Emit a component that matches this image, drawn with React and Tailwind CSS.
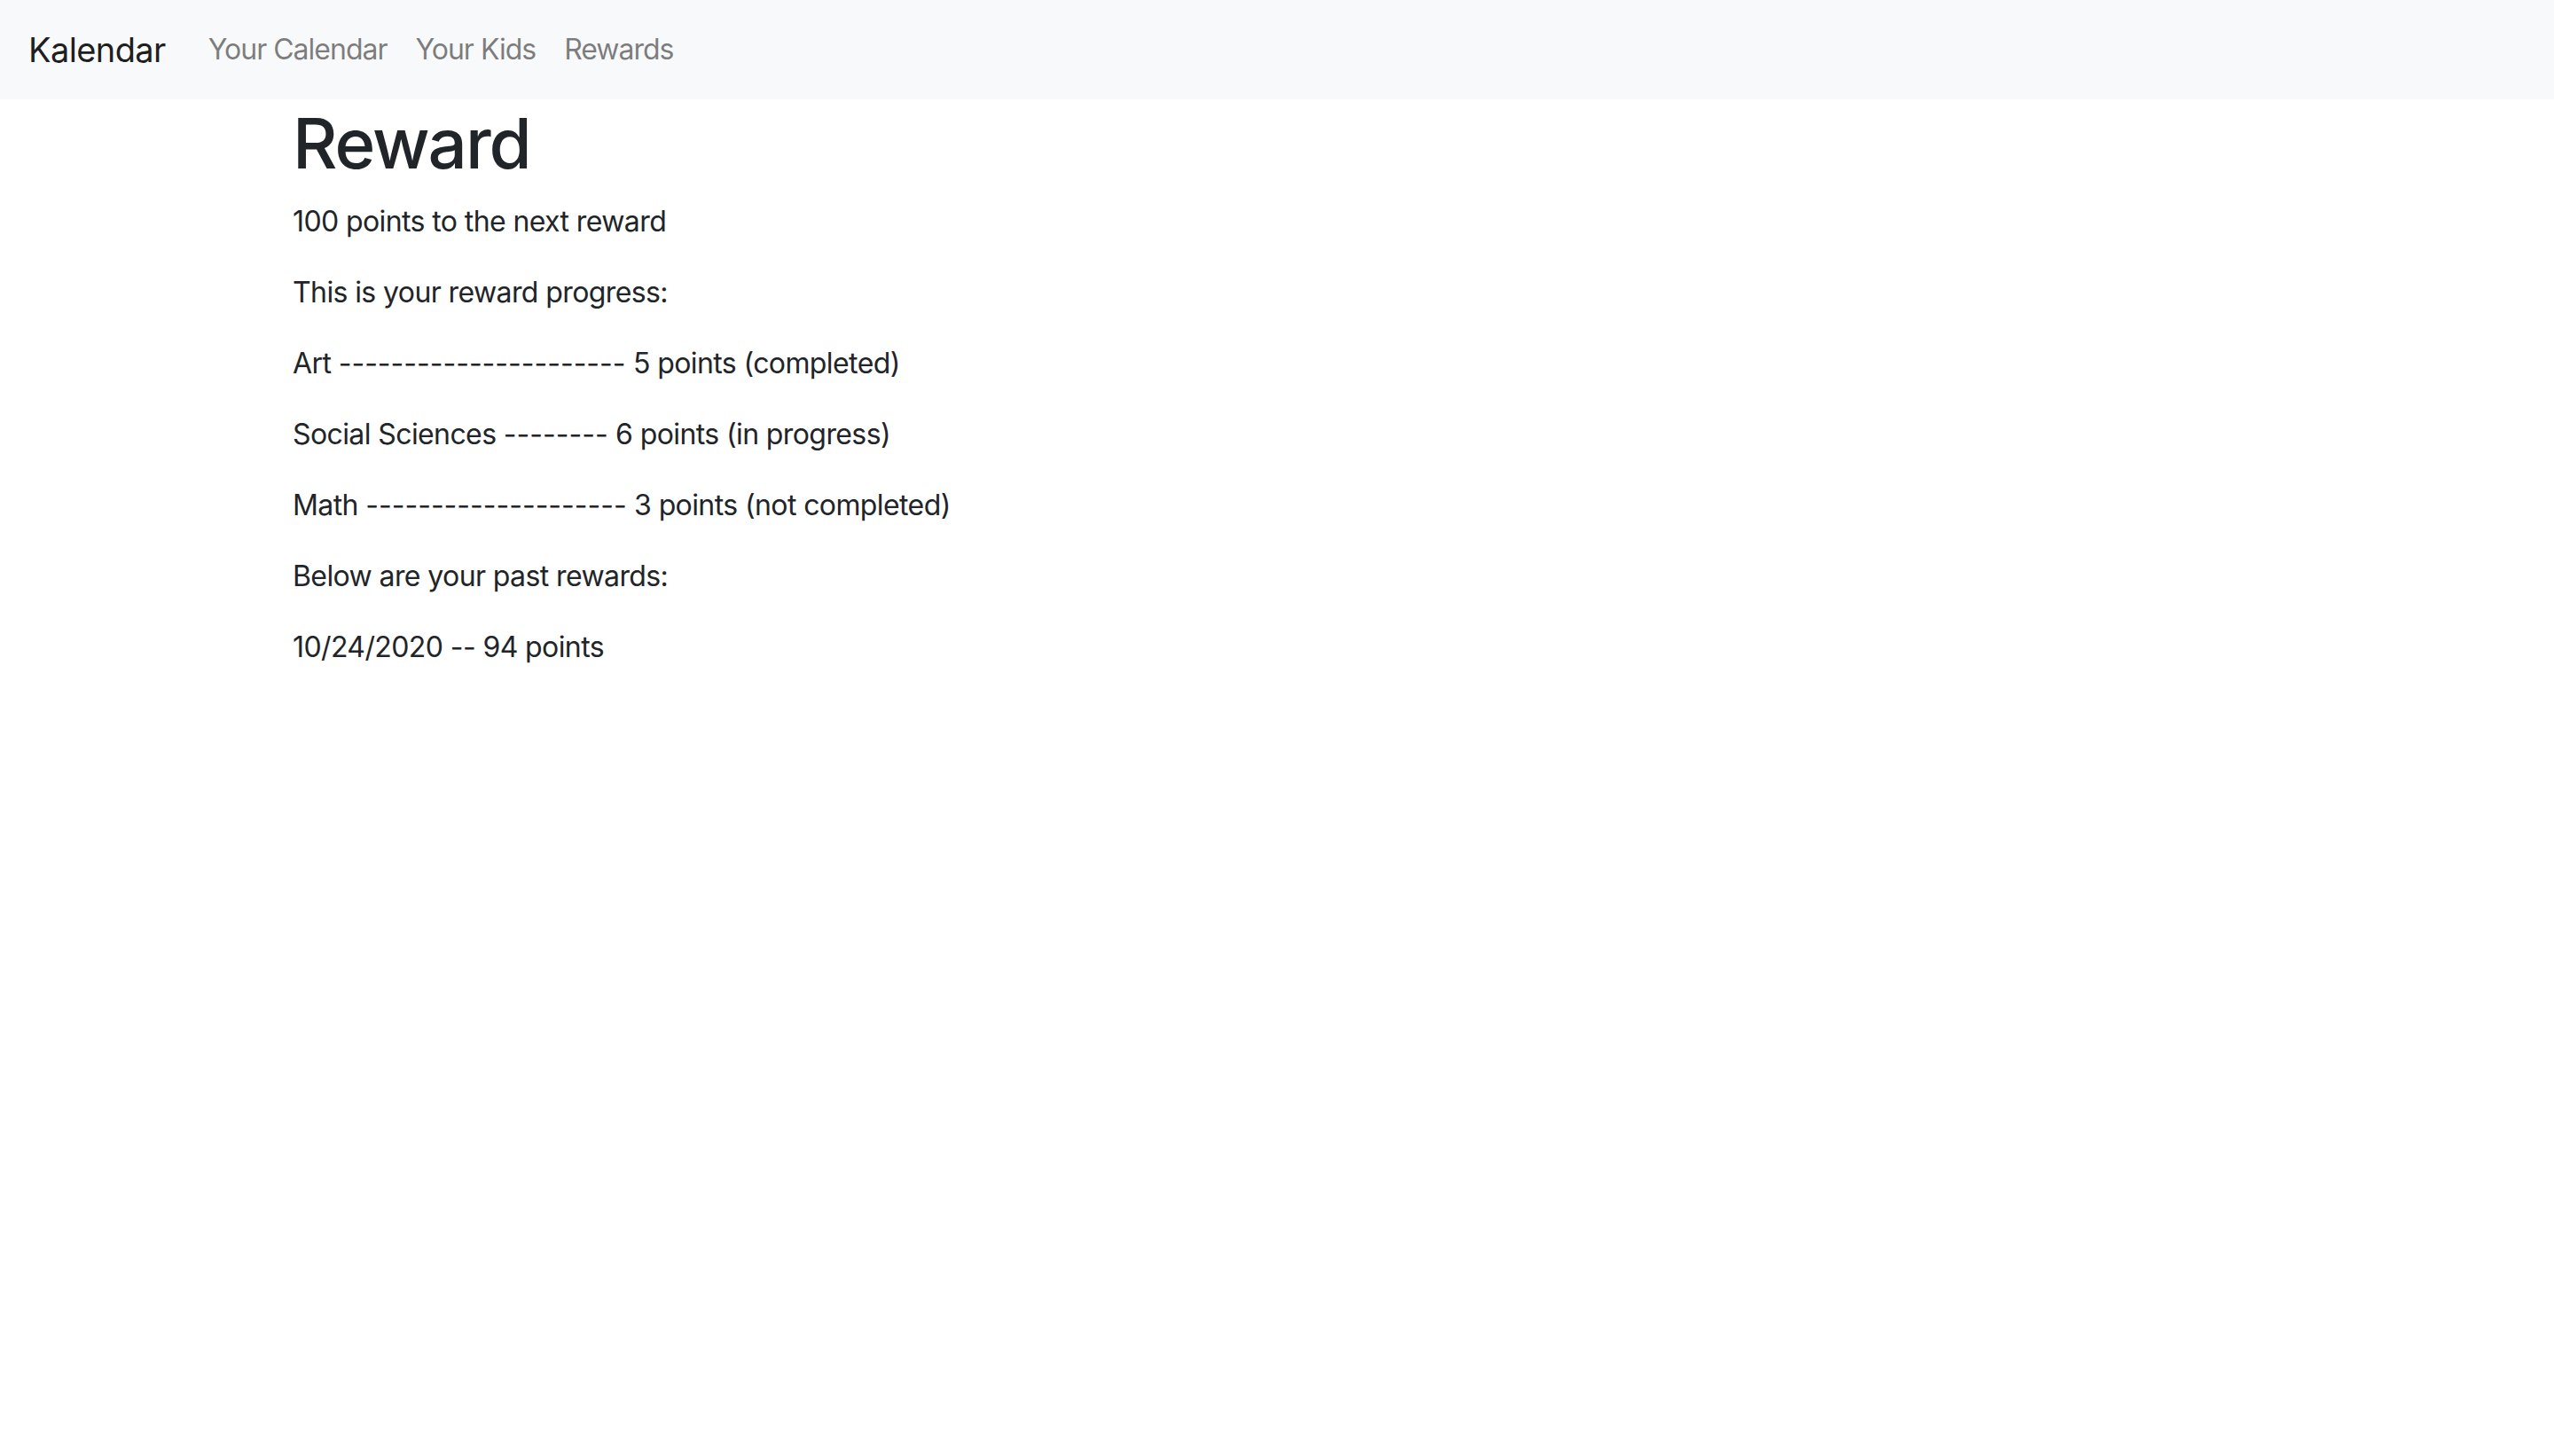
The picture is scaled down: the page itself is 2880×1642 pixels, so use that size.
import React from 'react'

const progress = [
  { subject: 'Art', dashes: '----------------------', points: '5 points (completed)' },
  { subject: 'Social Sciences', dashes: '--------', points: '6 points (in progress)' },
  { subject: 'Math', dashes: '--------------------', points: '3 points (not completed)' },
]

const App = () => {
  return (
    <div className="min-h-screen bg-white text-[#212529] font-['Inter','Liberation_Sans',sans-serif]">
      {/* navbar */}
      <nav className="flex items-center bg-[#f8f9fa] px-[32px] py-[16px]">
        <a className="mr-[32px] py-[10px] text-[38px] leading-[60px] tracking-[-0.6px] text-black/90">Kalendar</a>
        <ul className="flex items-center">
          <li><a className="block px-[16px] py-[16px] text-[32px] leading-[48px] tracking-[-1px] text-black/50">Your Calendar</a></li>
          <li><a className="block px-[16px] py-[16px] text-[32px] leading-[48px] tracking-[-1px] text-black/50">Your Kids</a></li>
          <li><a className="block px-[16px] py-[16px] text-[32px] leading-[48px] tracking-[-1px] text-black/50">Rewards</a></li>
        </ul>
      </nav>

      {/* content */}
      <div className="mx-auto w-[2280px] px-[30px] pt-[2px] text-[32px] leading-[48px] tracking-[-0.6px]">
        <h1 className="mb-[16px] text-[78px] leading-[96px] tracking-[-2px] font-medium">Reward</h1>
        <p className="mb-[32px]">100 points to the next reward</p>
        <p className="mb-[32px]">This is your reward progress:</p>
        {progress.map((item) => (
          <p key={item.subject} className="mb-[32px]">
            {item.subject} <span className="tracking-[0px]">{item.dashes}</span> {item.points}
          </p>
        ))}
        <p className="mb-[32px]">Below are your past rewards:</p>
        <p className="mb-[32px]">10/24/2020 -- 94 points</p>
      </div>
    </div>
  )
}

export default App
